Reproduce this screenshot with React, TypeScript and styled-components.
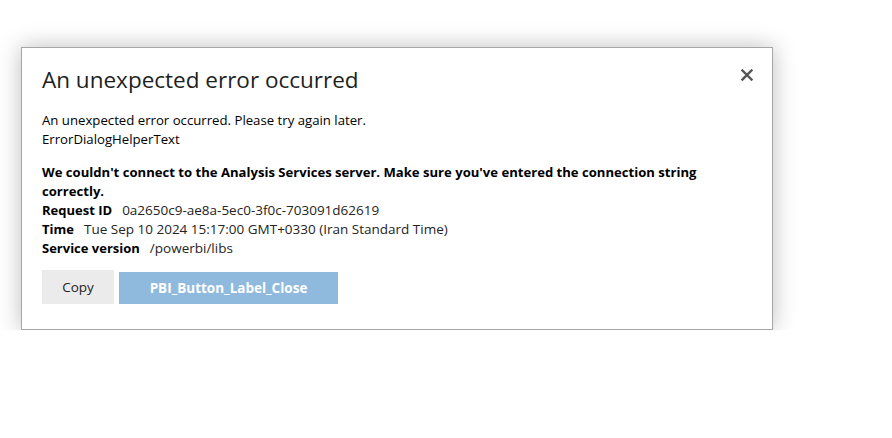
import * as React from 'react';
import styled, { createGlobalStyle } from 'styled-components';

const GlobalStyle = createGlobalStyle`
  html, body {
    margin: 0;
    padding: 0;
    background: #fff;
  }
  body {
    font-family: "Open Sans", "Noto Sans", sans-serif;
    color: #252423;
  }
`;

const Page = styled.div`
  padding: 47px 0 0 21px;
`;

const Dialog = styled.div`
  box-sizing: border-box;
  width: 752px;
  height: 283px;
  background: #fff;
  border: 1px solid #a6a6a6;
  box-shadow: 0 0 22px rgba(0, 0, 0, 0.26);
  padding: 16px 20px 0 20px;
  display: flex;
  flex-direction: column;
`;

const Header = styled.div`
  display: flex;
  justify-content: space-between;
  align-items: flex-start;
`;

const Title = styled.h1`
  margin: 0;
  font-size: 22.5px;
  font-weight: 400;
  line-height: 32px;
  color: #201f1e;
`;

const CloseIcon = styled.button`
  border: none;
  background: none;
  padding: 0;
  margin: 3px -3px 0 0;
  width: 16px;
  height: 16px;
  display: flex;
  align-items: center;
  justify-content: center;
  cursor: pointer;
`;

const Text = styled.p<{ $bold?: boolean; $gap?: number }>`
  margin: ${(p) => p.$gap ?? 0}px 0 0 0;
  font-size: ${(p) => (p.$bold ? 13.1 : 13.2)}px;
  line-height: 19px;
  font-weight: ${(p) => (p.$bold ? 700 : 400)};
  color: #000;
`;

const Detail = styled.div`
  font-size: 13.5px;
  line-height: 19px;
  color: #252423;
`;

const Label = styled.b`
  font-weight: 700;
  font-size: 13px;
  color: #000;
  margin-right: 10px;
`;

const Buttons = styled.div`
  display: flex;
  align-items: flex-end;
  gap: 5px;
  margin-top: 12px;
`;

const Button = styled.button<{ $primary?: boolean }>`
  font-family: inherit;
  border: none;
  font-size: 13.5px;
  cursor: pointer;
  height: ${(p) => (p.$primary ? 32 : 34)}px;
  padding: 0;
  width: ${(p) => (p.$primary ? 219 : 72)}px;
  background: ${(p) => (p.$primary ? '#8fbade' : '#ebebeb')};
  color: ${(p) => (p.$primary ? '#fff' : '#252423')};
  font-weight: ${(p) => (p.$primary ? 700 : 400)};
`;

export default function App() {
  return (
    <Page>
      <GlobalStyle />
      <Dialog>
        <Header>
          <Title>An unexpected error occurred</Title>
          <CloseIcon aria-label="Close">
            <svg width="12" height="12" viewBox="0 0 12 12">
              <path d="M1.5 1.5 L10.5 10.5 M10.5 1.5 L1.5 10.5" stroke="#555" strokeWidth="2.4" strokeLinecap="square" />
            </svg>
          </CloseIcon>
        </Header>
        <Text $gap={15}>An unexpected error occurred. Please try again later.</Text>
        <Text>ErrorDialogHelperText</Text>
        <Text $bold $gap={14}>
          We couldn't connect to the Analysis Services server. Make sure you've entered the connection string correctly.
        </Text>
        <Detail>
          <Label>Request ID</Label>0a2650c9-ae8a-5ec0-3f0c-703091d62619
        </Detail>
        <Detail>
          <Label>Time</Label>Tue Sep 10 2024 15:17:00 GMT+0330 (Iran Standard Time)
        </Detail>
        <Detail>
          <Label>Service version</Label>/powerbi/libs
        </Detail>
        <Buttons>
          <Button>Copy</Button>
          <Button $primary>PBI_Button_Label_Close</Button>
        </Buttons>
      </Dialog>
    </Page>
  );
}
